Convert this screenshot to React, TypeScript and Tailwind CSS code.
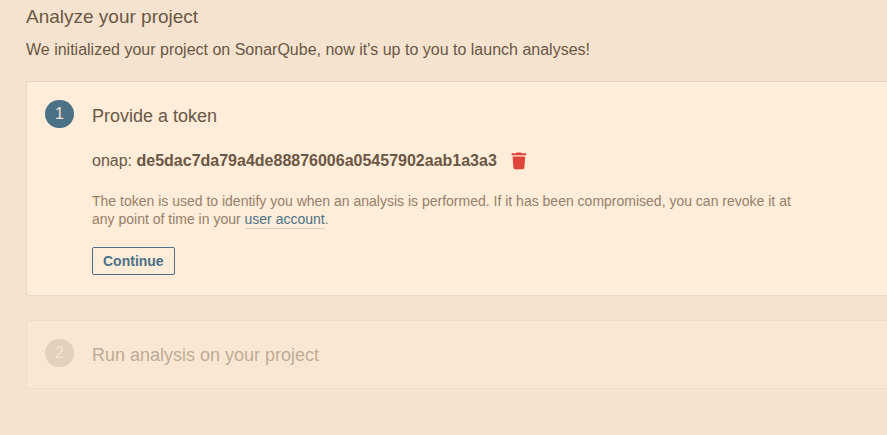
import type { ReactNode } from "react";

type StepProps = {
  number: number;
  title: string;
  open?: boolean;
  children?: ReactNode;
};

function Step({ number, title, open = false, children }: StepProps) {
  return (
    <section
      className={`flex items-start gap-[18px] rounded-l-[3px] border border-r-0 pl-[18px] pr-[75px] pt-[18px] ${
        open
          ? "border-[#ead8c4] bg-[#ffecd9] pb-5"
          : "border-[#f0dcc7] bg-[#f9e7d3] pb-[21px]"
      }`}
    >
      <div
        className={`flex h-7 w-[29px] shrink-0 items-center justify-center rounded-full text-base ${
          open ? "bg-[#4b7187] text-[#f2e2d1]" : "bg-[#e4d1bb] text-[#f7e5d1]"
        }`}
      >
        {number}
      </div>
      <div className="min-w-0 flex-1">
        <h2
          className={`pt-1 text-lg leading-6 ${
            open ? "text-[#6a5744]" : "text-[#bfab96]"
          }`}
        >
          {title}
        </h2>
        {children}
      </div>
    </section>
  );
}

function TrashIcon() {
  return (
    <svg
      viewBox="0 0 16 18"
      className="h-[18px] w-4"
      fill="currentColor"
      aria-hidden="true"
    >
      <path d="M1.2 1.2H5L5.5 0.4H10.2L10.7 1.2H14.6Q15.2 1.2 15.2 1.8V3.2H0.6V1.8Q0.6 1.2 1.2 1.2Z" />
      <path d="M1.6 4.4H14.2L13.4 15.8Q13.3 17.2 11.9 17.2H3.9Q2.5 17.2 2.4 15.8Z" />
    </svg>
  );
}

export default function App() {
  return (
    <main className="min-h-screen bg-[#f5e3cf] pb-11 pl-[26px] pt-[5px] font-['Liberation_Sans',Arial,sans-serif] text-[#6a5744]">
      <header>
        <h1 className="text-[19px] leading-6">Analyze your project</h1>
        <p className="mt-[9px] text-base leading-6">
          We initialized your project on SonarQube, now it's up to you to launch
          analyses!
        </p>
      </header>
      <div className="mt-[19px] flex flex-col gap-6">
        <Step number={1} title="Provide a token" open>
          <div className="mt-[21px] flex items-center gap-3.5 text-base leading-6">
            <p>
              onap:{" "}
              <strong className="font-bold">
                de5dac7da79a4de88876006a05457902aab1a3a3
              </strong>
            </p>
            <button type="button" aria-label="Delete token" className="text-[#df443b]">
              <TrashIcon />
            </button>
          </div>
          <p className="mt-[19px] max-w-[720px] text-[14px] leading-[18px] text-[#958069]">
            The token is used to identify you when an analysis is performed. If
            it has been compromised, you can revoke it at any point of time in
            your{" "}
            <a href="#account" className="border-b border-[#d8cdc0] pb-px text-[#4b7187]">
              user account
            </a>
            .
          </p>
          <button
            type="button"
            className="mt-[19px] flex h-7 items-center rounded-[2px] border border-[#4b7187] px-2.5 text-[14px] font-bold text-[#4b7187]"
          >
            Continue
          </button>
        </Step>
        <Step number={2} title="Run analysis on your project" />
      </div>
    </main>
  );
}
